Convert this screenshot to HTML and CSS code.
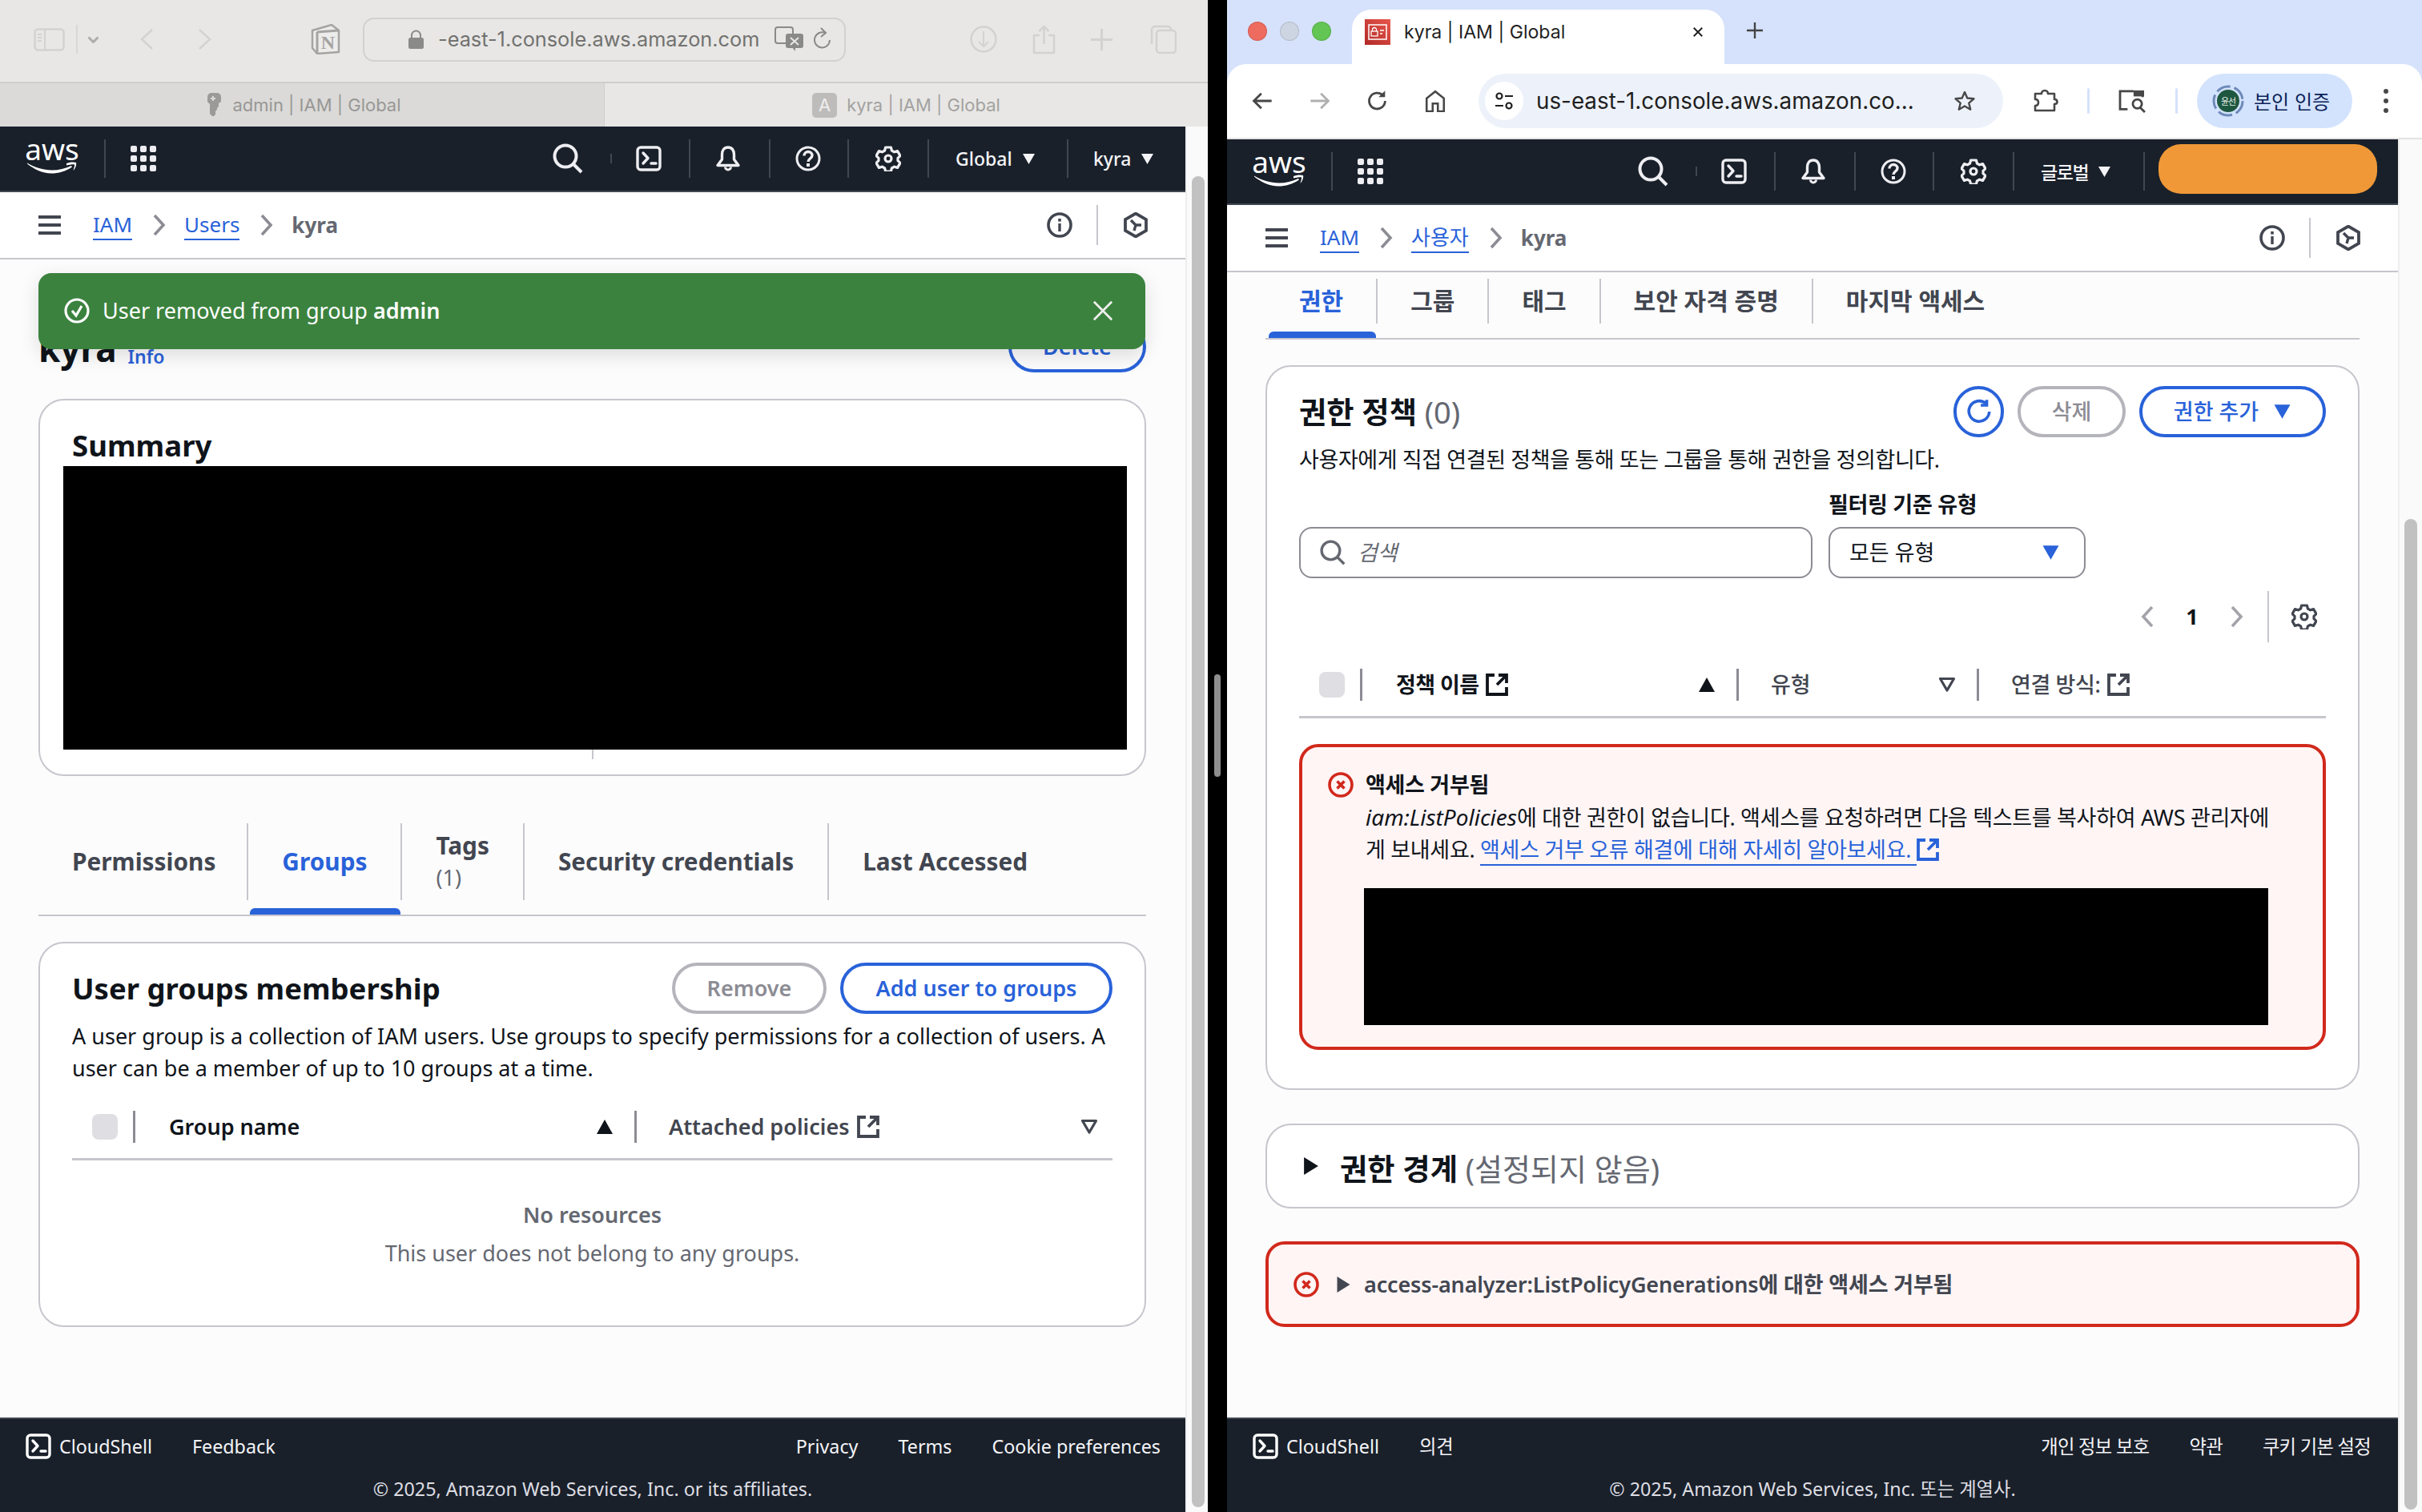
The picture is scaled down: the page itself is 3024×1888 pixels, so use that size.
FILE: index.html
```html
<!DOCTYPE html>
<html lang="ko">
<head>
<meta charset="utf-8">
<title>kyra | IAM | Global</title>
<link rel="stylesheet" href="styles.css">
</head>
<body>
<svg class="sprite" aria-hidden="true">
  <symbol id="i-search" viewBox="0 0 38 38"><circle cx="16" cy="16" r="13.500" fill="none" stroke="currentColor" stroke-width="4"/><path d="M26 26l10 10" fill="none" stroke="currentColor" stroke-width="4"/></symbol>
  <symbol id="i-shell" viewBox="0 0 32 32"><rect x="2" y="2" width="28" height="28" rx="4" fill="none" stroke="currentColor" stroke-width="3.400"/><path d="M9 9l6 6.500L9 22" fill="none" stroke="currentColor" stroke-width="3.400" stroke-linecap="round" stroke-linejoin="round"/><path d="M19 22h6" fill="none" stroke="currentColor" stroke-width="3.400" stroke-linecap="round"/></symbol>
  <symbol id="i-bell" viewBox="0 0 32 32"><path d="M16 2c-5 0-7.500 4-7.500 9v6L3 24.500h26L23.500 17v-6c0-5-2.500-9-7.500-9z" fill="none" stroke="currentColor" stroke-width="3.400" stroke-linejoin="round"/><path d="M12.500 26.500a3.500 3.500 0 0 0 7 0" fill="none" stroke="currentColor" stroke-width="3"/></symbol>
  <symbol id="i-help" viewBox="0 0 32 32"><circle cx="16" cy="16" r="14" fill="none" stroke="currentColor" stroke-width="3"/><path d="M11 12.500c0-3 2.300-5 5-5s5 2 5 4.500c0 4-5 4-5 8" fill="none" stroke="currentColor" stroke-width="3.400"/><rect x="14" y="22" width="4" height="4" fill="currentColor"/></symbol>
  <symbol id="i-gear" viewBox="0 0 32 32"><path d="M12.600 2h6.800l1 4 3.200 1.800 4-1.200 3.400 6-3 2.800v3.200l3 2.800-3.400 6-4-1.200-3.200 1.800-1 4h-6.800l-1-4-3.200-1.800-4 1.200-3.400-6 3-2.800v-3.200l-3-2.800 3.400-6 4 1.200 3.200-1.800z" fill="none" stroke="currentColor" stroke-width="3.200" stroke-linejoin="round"/><circle cx="16" cy="16" r="4" fill="none" stroke="currentColor" stroke-width="3.200"/></symbol>
  <symbol id="i-info" viewBox="0 0 32 32"><circle cx="16" cy="16" r="14" fill="none" stroke="currentColor" stroke-width="3.600"/><path d="M16 14v10" fill="none" stroke="currentColor" stroke-width="3.400"/><rect x="14.200" y="8" width="3.600" height="3.600" fill="currentColor"/></symbol>
  <symbol id="i-hex" viewBox="0 0 32 32"><path d="M16 1.500L29 9v14l-13 7.500L3 23V9z" fill="none" stroke="currentColor" stroke-width="3.800" stroke-linejoin="miter"/><path d="M10 10l6 6h7M16 16l-2 7" fill="none" stroke="currentColor" stroke-width="3.400"/></symbol>
  <symbol id="i-ext" viewBox="0 0 28 28"><path d="M11 2H2v24h24v-9" fill="none" stroke="currentColor" stroke-width="3.800"/><path d="M16 2h10v10" fill="none" stroke="currentColor" stroke-width="3.800"/><path d="M25 3L14 14" fill="none" stroke="currentColor" stroke-width="3.800"/></symbol>
  <symbol id="i-err" viewBox="0 0 32 32"><circle cx="16" cy="16" r="14" fill="none" stroke="currentColor" stroke-width="3.600"/><path d="M11.500 11.500l9 9M20.500 11.500l-9 9" fill="none" stroke="currentColor" stroke-width="3.600"/></symbol>
  <symbol id="i-ok" viewBox="0 0 32 32"><circle cx="16" cy="16" r="14" fill="none" stroke="currentColor" stroke-width="3.200"/><path d="M10 16l5 6 7-12" fill="none" stroke="currentColor" stroke-width="3.200"/></symbol>
  <symbol id="i-sortup" viewBox="0 0 22 20"><path d="M11 1l10 18H1z" fill="currentColor"/></symbol>
  <symbol id="i-sortdn" viewBox="0 0 22 20"><path d="M2.500 2.500h17L11 17z" fill="none" stroke="currentColor" stroke-width="3.200" stroke-linejoin="round"/></symbol>
  <symbol id="i-tridn" viewBox="0 0 18 16"><path d="M1 1h16L9 15z" fill="currentColor"/></symbol>
  <symbol id="i-triright" viewBox="0 0 18 22"><path d="M1 1l16 10L1 21z" fill="currentColor"/></symbol>
  <symbol id="i-chev" viewBox="0 0 16 28"><path d="M2 2l11 12L2 26" fill="none" stroke="currentColor" stroke-width="3.600"/></symbol>
  <symbol id="i-chevl" viewBox="0 0 16 28"><path d="M14 2L3 14l11 12" fill="none" stroke="currentColor" stroke-width="3.600"/></symbol>
  <symbol id="i-menu" viewBox="0 0 28 24"><path d="M0 2h28M0 12h28M0 22h28" fill="none" stroke="currentColor" stroke-width="4"/></symbol>
  <symbol id="i-close" viewBox="0 0 28 28"><path d="M2 2l24 24M26 2L2 26" fill="none" stroke="currentColor" stroke-width="3"/></symbol>
  <symbol id="i-grid" viewBox="0 0 32 32"><path d="M0 2a2 2 0 0 1 2-2h4a2 2 0 0 1 2 2v4a2 2 0 0 1-2 2H2a2 2 0 0 1-2-2zM12 2a2 2 0 0 1 2-2h4a2 2 0 0 1 2 2v4a2 2 0 0 1-2 2h-4a2 2 0 0 1-2-2zM24 2a2 2 0 0 1 2-2h4a2 2 0 0 1 2 2v4a2 2 0 0 1-2 2h-4a2 2 0 0 1-2-2zM0 14a2 2 0 0 1 2-2h4a2 2 0 0 1 2 2v4a2 2 0 0 1-2 2H2a2 2 0 0 1-2-2zM12 14a2 2 0 0 1 2-2h4a2 2 0 0 1 2 2v4a2 2 0 0 1-2 2h-4a2 2 0 0 1-2-2zM24 14a2 2 0 0 1 2-2h4a2 2 0 0 1 2 2v4a2 2 0 0 1-2 2h-4a2 2 0 0 1-2-2zM0 26a2 2 0 0 1 2-2h4a2 2 0 0 1 2 2v4a2 2 0 0 1-2 2H2a2 2 0 0 1-2-2zM12 26a2 2 0 0 1 2-2h4a2 2 0 0 1 2 2v4a2 2 0 0 1-2 2h-4a2 2 0 0 1-2-2zM24 26a2 2 0 0 1 2-2h4a2 2 0 0 1 2 2v4a2 2 0 0 1-2 2h-4a2 2 0 0 1-2-2z" fill="currentColor"/></symbol>
  <symbol id="i-smile" viewBox="0 0 64 16"><path d="M1 2.500C10 8 21 11.500 32 11.500c8 0 17-2 24-5.500l1 1.500C49 13 40 15.500 31 15.500 20 15.500 9 10 1 3.500z" fill="currentColor"/><path d="M50 3c3-1.500 9-2 12-1 .8 2-.5 7-3.500 10 .5-3 2-6 1.500-7.500-2-.6-6 .2-10 1z" fill="currentColor"/></symbol>
  <symbol id="i-refresh" viewBox="0 0 32 32"><path d="M24 6.500A12 12 0 1 0 28 16" fill="none" stroke="currentColor" stroke-width="3.400"/><path d="M25 2v6.500h-7" fill="none" stroke="currentColor" stroke-width="3.400"/></symbol>
</svg>

<div class="desktop">

  <section class="win win-left">
    <header class="saf-bar">
      <svg class="saf-sidebar" viewBox="0 0 39 29"><rect x="1.500" y="1.500" width="36" height="26" rx="4" fill="none" stroke="currentColor" stroke-width="2.500"/><path d="M14 2v25M5 8h5M5 12h5M5 16h5" fill="none" stroke="currentColor" stroke-width="2"/></svg>
      <span class="saf-sep"></span>
      <svg class="saf-chev" viewBox="0 0 15 9"><path d="M1.500 1.500L7.500 7.500l6-6" fill="none" stroke="#aeadab" stroke-width="3"/></svg>
      <svg class="saf-back" viewBox="0 0 17 28"><path d="M15 2L2 14l13 12" fill="none" stroke="currentColor" stroke-width="2.500"/></svg>
      <svg class="saf-fwd" viewBox="0 0 17 28"><path d="M2 2l13 12L2 26" fill="none" stroke="currentColor" stroke-width="2.500"/></svg>
      <svg class="saf-notion" viewBox="0 0 37 38"><path d="M2 8L26 1l9 7v27L8 37 2 30z" fill="#ececea" stroke="#a5a4a2" stroke-width="2.500" stroke-linejoin="round"/><path d="M8 10l27-2M8 10v27" stroke="#a5a4a2" stroke-width="3" fill="none"/><text x="21.500" y="31" class="saf-n">N</text></svg>
      <div class="saf-addr">
        <svg class="saf-lock" viewBox="0 0 19 24"><path d="M4 11V7a5.500 5.500 0 0 1 11 0v4" fill="none" stroke="#8a8a88" stroke-width="2"/><rect x="0" y="10" width="19" height="14" rx="2.500" fill="#8a8a88"/></svg>
        <span class="saf-url">-east-1.console.aws.amazon.com</span>
        <svg class="saf-trans" viewBox="0 0 38 32"><rect x="1" y="1" width="22" height="20" rx="3" fill="none" stroke="#8a8a88" stroke-width="2"/><rect x="14" y="9" width="22" height="18" rx="3" fill="#8a8a88"/><path d="M21 25l5 6v-6z" fill="#8a8a88"/><path d="M20 14l10 9M30 14l-10 9" stroke="#e8e7e5" stroke-width="2"/></svg>
        <svg class="saf-reload" viewBox="0 0 22 30"><path d="M15 7.500A9.500 9.500 0 1 0 20 16" fill="none" stroke="#8a8a88" stroke-width="2"/><path d="M9 1l6 6-6 5" fill="none" stroke="#8a8a88" stroke-width="2"/></svg>
      </div>
      <svg class="saf-dl" viewBox="0 0 34 38"><circle cx="17" cy="19" r="15.500" fill="none" stroke="currentColor" stroke-width="2.500"/><path d="M17 9v19M11 22l6 6 6-6" fill="none" stroke="currentColor" stroke-width="2"/></svg>
      <svg class="saf-share" viewBox="0 0 29 37"><path d="M9 13H2v22h25V13h-7" fill="none" stroke="currentColor" stroke-width="2.500" stroke-linejoin="round"/><path d="M14.500 24V2M8.500 8l6-6 6 6" fill="none" stroke="currentColor" stroke-width="2.500"/></svg>
      <svg class="saf-plus" viewBox="0 0 27 27"><path d="M13.500 0v27M0 13.500h27" stroke="currentColor" stroke-width="3"/></svg>
      <svg class="saf-tabs" viewBox="0 0 34 36"><rect x="9" y="7" width="24" height="28" rx="4" fill="none" stroke="currentColor" stroke-width="2.500"/><path d="M3 24V6a4 4 0 0 1 4-4h16a4 4 0 0 1 4 4" fill="none" stroke="currentColor" stroke-width="2.500"/></svg>
    </header>
    <div class="saf-tabstrip">
      <div class="saf-tab saf-tab-on">
        <svg class="saf-key" viewBox="0 0 21 30"><path d="M2 5a5 5 0 0 1 5-5h7a5 5 0 0 1 5 5v6l-3 2v4l-2 2v2l-2 2v4l-2 2h-2l-3-3V14l-3-3z" fill="#9b9a98"/><path d="M9 4v6M6 7h6" stroke="#dbdad8" stroke-width="2"/></svg>
        <span>admin | IAM | Global</span>
      </div>
      <div class="saf-tab">
        <span class="saf-fav">A</span>
        <span>kyra | IAM | Global</span>
      </div>
    </div>
    <div class="win-body">
      <div class="console">
        <nav class="topnav">
          <div class="aws-logo"><span class="aws-word">aws</span><svg class="aws-smile"><use href="#i-smile"/></svg></div>
          <span class="nav-div"></span>
          <svg class="nav-grid"><use href="#i-grid"/></svg>
          <div class="nav-right">
            <div class="nav-search"><svg class="ic-search"><use href="#i-search"/></svg></div>
            <span class="nav-tick"></span>
            <div class="nav-shell"><svg class="ic-32"><use href="#i-shell"/></svg></div>
            <div class="nav-cell nav-bell"><svg class="ic-32"><use href="#i-bell"/></svg></div>
            <div class="nav-cell nav-cell-98"><svg class="ic-32"><use href="#i-help"/></svg></div>
            <div class="nav-cell"><svg class="ic-32"><use href="#i-gear"/></svg></div>
            <div class="nav-cell nav-menu nav-region-l">Global<svg class="ic-tri"><use href="#i-tridn"/></svg></div>
            <div class="nav-cell nav-menu nav-user">kyra<svg class="ic-tri"><use href="#i-tridn"/></svg></div>
          </div>
        </nav>
        <div class="crumbs">
          <svg class="ic-menu"><use href="#i-menu"/></svg>
          <a class="link crumb-first">IAM</a>
          <svg class="ic-chev"><use href="#i-chev"/></svg>
          <a class="link">Users</a>
          <svg class="ic-chev"><use href="#i-chev"/></svg>
          <span class="crumb-now">kyra</span>
          <div class="crumb-tools">
            <svg class="ic-32"><use href="#i-info"/></svg>
            <span class="crumb-div"></span>
            <svg class="ic-32"><use href="#i-hex"/></svg>
          </div>
        </div>
        <main class="main main-l">
          <div class="flash">
            <svg class="ic-32"><use href="#i-ok"/></svg>
            <span class="flash-text">User removed from group <b>admin</b></span>
            <svg class="flash-x"><use href="#i-close"/></svg>
          </div>
          <div class="page-head">
            <h1 class="page-title">kyra</h1>
            <a class="page-info">Info</a>
            <button class="btn btn-blue btn-delete">Delete</button>
          </div>
          <section class="card card-summary">
            <h2 class="summary-title">Summary</h2>
            <div class="redact redact-summary"></div>
            <span class="summary-tick"></span>
          </section>
          <div class="tabs tabs-l">
            <div class="tab tab-first">Permissions</div>
            <div class="tab tab-on">Groups</div>
            <div class="tab tab-stack"><span>Tags</span><span class="tab-count">(1)</span></div>
            <div class="tab">Security credentials</div>
            <div class="tab">Last Accessed</div>
          </div>
          <section class="card card-groups">
            <div class="card-head">
              <h2 class="card-title">User groups membership</h2>
              <div class="card-actions">
                <button class="btn btn-off btn-remove">Remove</button>
                <button class="btn btn-blue btn-add">Add user to groups</button>
              </div>
            </div>
            <p class="card-desc">A user group is a collection of IAM users. Use groups to specify permissions for a collection of users. A user can be a member of up to 10 groups at a time.</p>
            <div class="thead thead-l">
              <div class="th-check"><span class="checkbox"></span></div>
              <div class="th th-sorted th-l1">Group name<svg class="ic-sort"><use href="#i-sortup"/></svg></div>
              <div class="th th-l2"><span class="th-label">Attached policies<svg class="ic-ext"><use href="#i-ext"/></svg></span><svg class="ic-sort ic-sort-off"><use href="#i-sortdn"/></svg></div>
            </div>
            <div class="empty">
              <strong class="empty-title">No resources</strong>
              <span class="empty-text">This user does not belong to any groups.</span>
            </div>
          </section>
        </main>
        <footer class="foot">
          <div class="foot-row">
            <svg class="ic-32 foot-shell"><use href="#i-shell"/></svg>
            <span class="foot-cs">CloudShell</span>
            <span class="foot-fb">Feedback</span>
            <div class="foot-links"><span>Privacy</span><span>Terms</span><span>Cookie preferences</span></div>
          </div>
          <div class="foot-copy">© 2025, Amazon Web Services, Inc. or its affiliates.</div>
        </footer>
      </div>
      <div class="scroll scroll-l"><span class="thumb thumb-l"></span></div>
    </div>
  </section>

  <span class="split-handle"></span>

  <section class="win win-right">
    <header class="chr-tabs">
      <span class="light light-r"></span><span class="light light-g"></span><span class="light light-n"></span>
      <div class="chr-tab">
        <span class="chr-fav"><svg viewBox="0 0 24 20" class="chr-fav-i"><rect x="1" y="1" width="22" height="18" fill="none" stroke="#fff" stroke-width="1.500"/><rect x="4" y="9" width="8" height="6" fill="none" stroke="#fff" stroke-width="1.300"/><path d="M5.500 9V7a2.500 2.500 0 0 1 5 0v2" fill="none" stroke="#fff" stroke-width="1.300"/><path d="M15 8h5M15 12h3" stroke="#fff" stroke-width="1.500"/></svg></span>
        <span class="chr-title">kyra | IAM | Global</span>
        <svg class="chr-x" viewBox="0 0 16 16"><path d="M2 2l12 12M14 2L2 14" stroke="#1f1f1f" stroke-width="2.200"/></svg>
      </div>
      <svg class="chr-plus" viewBox="0 0 20 20"><path d="M10 0v20M0 10h20" stroke="#444" stroke-width="2.400"/></svg>
    </header>
    <div class="chr-bar">
      <span class="chr-btn"><svg viewBox="0 0 24 24" class="ic-chr"><path d="M22 12H3M11 4l-8 8 8 8" fill="none" stroke="#474747" stroke-width="2.400"/></svg></span>
      <span class="chr-btn"><svg viewBox="0 0 24 24" class="ic-chr"><path d="M2 12h19M13 4l8 8-8 8" fill="none" stroke="#b0b0b0" stroke-width="2.400"/></svg></span>
      <span class="chr-btn"><svg viewBox="0 0 24 24" class="ic-chr"><path d="M20 12a8.500 8.500 0 1 1-2.500-6" fill="none" stroke="#474747" stroke-width="2.400"/><path d="M20 1v7h-7z" fill="#474747"/></svg></span>
      <span class="chr-btn"><svg viewBox="0 0 24 26" class="ic-chr"><path d="M2 25V10L12 2l10 8v15h-7v-9H9v9z" fill="none" stroke="#474747" stroke-width="2.400"/></svg></span>
      <div class="omni">
        <span class="omni-site"><svg viewBox="0 0 24 24" class="ic-site"><circle cx="6" cy="6" r="3.500" fill="none" stroke="#1f1f1f" stroke-width="2.200"/><path d="M13 6h10M1 18h10" stroke="#1f1f1f" stroke-width="2.200"/><circle cx="18" cy="18" r="3.500" fill="none" stroke="#1f1f1f" stroke-width="2.200"/></svg></span>
        <span class="omni-url">us-east-1.console.aws.amazon.co...</span>
        <svg viewBox="0 0 28 28" class="omni-star"><path d="M14 3l3.300 7.500 8.200.8-6.200 5.400 1.900 8L14 20.500l-7.200 4.200 1.900-8-6.200-5.400 8.200-.8z" fill="none" stroke="#474747" stroke-width="2.400" stroke-linejoin="round"/></svg>
      </div>
      <span class="chr-btn chr-ext"><svg viewBox="0 0 32 32" class="ic-puzzle"><path d="M4 7h7c0-2 1.500-4 4-4s4 2 4 4h8v7c2 0 3.500 1 3.500 3s-1.500 3-3.500 3v8H3v-6c2.500 0 4-1.500 4-4s-1.500-4-4-4V7z" fill="none" stroke="#474747" stroke-width="2.600" stroke-linejoin="round"/></svg></span>
      <span class="chr-sep"></span>
      <span class="chr-btn chr-tabsearch"><svg viewBox="0 0 36 32" class="ic-tabsearch"><path d="M20 3H2v24h10" fill="none" stroke="#474747" stroke-width="3"/><rect x="20" y="2" width="14" height="8" fill="#474747"/><path d="M32 3v8" stroke="#474747" stroke-width="3"/><circle cx="25" cy="20" r="6" fill="none" stroke="#474747" stroke-width="3"/><path d="M29 25l6 6" stroke="#474747" stroke-width="3"/></svg></span>
      <span class="chr-sep chr-sep2"></span>
      <div class="chr-profile">
        <span class="avatar"><svg viewBox="0 0 40 40" class="avatar-ring"><circle cx="20" cy="20" r="18" fill="none" stroke="#6f8ab9" stroke-width="3" stroke-dasharray="18 5"/></svg><span class="avatar-in">윤선</span></span>
        <span class="profile-text">본인 인증</span>
      </div>
      <svg viewBox="0 0 8 32" class="chr-dots"><circle cx="4" cy="4" r="3" fill="#474747"/><circle cx="4" cy="16" r="3" fill="#474747"/><circle cx="4" cy="28" r="3" fill="#474747"/></svg>
    </div>
    <div class="win-body">
      <div class="console console-r">
        <nav class="topnav">
          <div class="aws-logo"><span class="aws-word">aws</span><svg class="aws-smile"><use href="#i-smile"/></svg></div>
          <span class="nav-div"></span>
          <svg class="nav-grid"><use href="#i-grid"/></svg>
          <div class="nav-right">
            <div class="nav-search"><svg class="ic-search"><use href="#i-search"/></svg></div>
            <span class="nav-tick"></span>
            <div class="nav-shell"><svg class="ic-32"><use href="#i-shell"/></svg></div>
            <div class="nav-cell nav-bell"><svg class="ic-32"><use href="#i-bell"/></svg></div>
            <div class="nav-cell nav-cell-98"><svg class="ic-32"><use href="#i-help"/></svg></div>
            <div class="nav-cell"><svg class="ic-32"><use href="#i-gear"/></svg></div>
            <div class="nav-cell nav-menu nav-region-r">글로벌<svg class="ic-tri"><use href="#i-tridn"/></svg></div>
            <div class="nav-cell nav-user-r"><span class="nav-orange"></span></div>
          </div>
        </nav>
        <div class="crumbs crumbs-k">
          <svg class="ic-menu"><use href="#i-menu"/></svg>
          <a class="link crumb-first">IAM</a>
          <svg class="ic-chev"><use href="#i-chev"/></svg>
          <a class="link">사용자</a>
          <svg class="ic-chev"><use href="#i-chev"/></svg>
          <span class="crumb-now">kyra</span>
          <div class="crumb-tools">
            <svg class="ic-32"><use href="#i-info"/></svg>
            <span class="crumb-div"></span>
            <svg class="ic-32"><use href="#i-hex"/></svg>
          </div>
        </div>
        <main class="main main-r">
          <div class="tabs tabs-r">
            <div class="tab tab-on tab-first">권한</div>
            <div class="tab">그룹</div>
            <div class="tab">태그</div>
            <div class="tab">보안 자격 증명</div>
            <div class="tab">마지막 액세스</div>
          </div>
          <section class="card card-perm">
            <div class="card-head">
              <h2 class="card-title card-title-k">권한 정책 <span class="card-count">(0)</span></h2>
              <div class="card-actions">
                <button class="btn btn-blue btn-round"><svg class="ic-32"><use href="#i-refresh"/></svg></button>
                <button class="btn btn-off btn-del-k">삭제</button>
                <button class="btn btn-blue btn-add-k">권한 추가<svg class="ic-tri ic-tri-btn"><use href="#i-tridn"/></svg></button>
              </div>
            </div>
            <p class="card-desc card-desc-k">사용자에게 직접 연결된 정책을 통해 또는 그룹을 통해 권한을 정의합니다.</p>
            <div class="filters">
              <div class="field field-search">
                <svg class="ic-field"><use href="#i-search"/></svg>
                <span class="placeholder">검색</span>
              </div>
              <div class="filter-col">
                <label class="filter-label">필터링 기준 유형</label>
                <div class="field field-select">모든 유형<svg class="ic-tri ic-tri-sel"><use href="#i-tridn"/></svg></div>
              </div>
            </div>
            <div class="pager">
              <svg class="ic-pg"><use href="#i-chevl"/></svg>
              <span class="pg-num">1</span>
              <svg class="ic-pg"><use href="#i-chev"/></svg>
              <span class="pg-div"></span>
              <svg class="ic-32 ic-pg-gear"><use href="#i-gear"/></svg>
            </div>
            <div class="thead thead-r">
              <div class="th-check"><span class="checkbox"></span></div>
              <div class="th th-sorted th-r1"><span class="th-label">정책 이름<svg class="ic-ext"><use href="#i-ext"/></svg></span><svg class="ic-sort"><use href="#i-sortup"/></svg></div>
              <div class="th th-plain th-r2">유형<svg class="ic-sort ic-sort-off"><use href="#i-sortdn"/></svg></div>
              <div class="th th-plain th-r3"><span class="th-label">연결 방식:<svg class="ic-ext"><use href="#i-ext"/></svg></span></div>
            </div>
            <div class="alert alert-big">
              <svg class="ic-32 ic-err"><use href="#i-err"/></svg>
              <div class="alert-body">
                <strong class="alert-title">액세스 거부됨</strong>
                <p class="alert-text"><i>iam:ListPolicies</i>에 대한 권한이 없습니다. 액세스를 요청하려면 다음 텍스트를 복사하여 AWS 관리자에<br>게 보내세요. <a class="link">액세스 거부 오류 해결에 대해 자세히 알아보세요.&nbsp;</a><svg class="ic-ext ic-ext-link"><use href="#i-ext"/></svg></p>
                <div class="redact redact-alert"></div>
              </div>
            </div>
          </section>
          <section class="card card-bound">
            <svg class="ic-expand"><use href="#i-triright"/></svg>
            <h2 class="card-title card-title-k">권한 경계 <span class="card-count">(설정되지 않음)</span></h2>
          </section>
          <div class="alert alert-small">
            <svg class="ic-32 ic-err"><use href="#i-err"/></svg>
            <svg class="ic-expand-s"><use href="#i-triright"/></svg>
            <span class="alert-line">access-analyzer:ListPolicyGenerations에 대한 액세스 거부됨</span>
          </div>
        </main>
        <footer class="foot">
          <div class="foot-row">
            <svg class="ic-32 foot-shell"><use href="#i-shell"/></svg>
            <span class="foot-cs">CloudShell</span>
            <span class="foot-fb">의견</span>
            <div class="foot-links foot-links-k"><span>개인 정보 보호</span><span>약관</span><span>쿠키 기본 설정</span></div>
          </div>
          <div class="foot-copy">© 2025, Amazon Web Services, Inc. 또는 계열사.</div>
        </footer>
      </div>
      <div class="scroll scroll-r"><span class="thumb thumb-r"></span></div>
    </div>
  </section>
</div>
</body>
</html>
```

FILE: styles.css
```css
* { box-sizing: border-box; }
html, body { margin: 0; padding: 0; background: #000; }
body { width: 3024px; height: 1888px; overflow: hidden; font-family: "Noto Sans", "Noto Sans CJK KR", sans-serif; font-size: 27px; line-height: 40px; color: #0f141a; }
.sprite { display: none; }
svg { display: block; flex: none; }
p, h1, h2 { margin: 0; }
button { font: inherit; }

.desktop { position: relative; width: 3024px; height: 1888px; }
.win { position: absolute; top: 0; height: 1888px; display: flex; flex-direction: column; }
.win-left { left: 0; width: 1508px; background: #e8e7e5; }
.win-right { left: 1532px; width: 1492px; background: #d6e2fb; }
.win-body { flex: 1; display: flex; min-height: 0; }
.split-handle { position: absolute; left: 1516px; top: 842px; width: 8px; height: 128px; border-radius: 4px; background: #8e8e8e; }

/* Safari chrome */
.saf-bar { height: 102px; display: flex; align-items: center; color: #d3d2d0; background: #e8e7e5; }
.saf-bar svg { margin-top: -4px; }
.saf-sidebar { width: 39px; height: 29px; margin-left: 42px; }
.saf-sep { width: 2px; height: 36px; margin: -4px 0 0 14px; background: #d8d7d5; }
.saf-chev { width: 15px; height: 9px; margin-left: 12px; }
.saf-back { width: 17px; height: 28px; margin-left: 51px; }
.saf-fwd { width: 17px; height: 28px; margin-left: 55px; }
.saf-notion { width: 37px; height: 38px; margin-left: 124px; }
.saf-n { font-family: "Liberation Serif", serif; font-size: 24px; font-weight: 700; fill: #a5a4a2; text-anchor: middle; }
.saf-addr { width: 603px; height: 55px; margin: -4px 0 0 28px; border: 2px solid #d2d1cf; border-radius: 14px; display: flex; align-items: center; padding-left: 55px; flex: none; }
.saf-addr svg { margin-top: 0; }
.saf-lock { width: 19px; height: 24px; }
.saf-url { font-family: Inter, sans-serif; font-size: 25.300px; color: #727270; margin-left: 18px; white-space: nowrap; line-height: 30px; }
.saf-trans { width: 38px; height: 32px; margin-left: 19px; }
.saf-reload { width: 22px; height: 30px; margin-left: 11px; }
.saf-dl { width: 34px; height: 38px; margin-left: 155px; }
.saf-share { width: 29px; height: 37px; margin-left: 44px; }
.saf-plus { width: 27px; height: 27px; margin-left: 44px; }
.saf-tabs { width: 34px; height: 36px; margin-left: 46px; }
.saf-tabstrip { height: 56px; display: flex; border-top: 2px solid #cfcecc; background: #e8e7e5; }
.saf-tab { width: 753px; display: flex; align-items: center; justify-content: center; gap: 12px; font-family: Inter, sans-serif; font-size: 22px; color: #a3a2a0; line-height: 30px; }
.saf-tab-on { width: 755px; padding-left: 4px; background: #dbdad8; border-right: 1px solid #cfcecc; color: #989795; }
.saf-key { width: 21px; height: 30px; }
.saf-fav { width: 31px; height: 31px; border-radius: 5px; background: #bdbcba; color: #eee; display: flex; align-items: center; justify-content: center; font-size: 22px; }

/* Chrome */
.chr-tabs { height: 80px; display: flex; align-items: flex-start; padding-left: 26px; background: #d6e2fb; }
.light { width: 24px; height: 24px; border-radius: 50%; margin-top: 27px; margin-right: 16px; border: 1px solid rgba(0,0,0,.12); }
.light-r { background: #ee6b5f; }
.light-g { background: #cdd5e3; }
.light-n { background: #62c554; }
.chr-tab { width: 465px; height: 68px; margin-left: 10px; margin-top: 12px; background: #fff; border-radius: 24px 24px 0 0; display: flex; align-items: center; padding: 0 16px 12px 16px; }
.chr-fav { width: 32px; height: 32px; background: linear-gradient(45deg, #b12a27, #e9574c); display: flex; align-items: center; justify-content: center; }
.chr-fav-i { width: 24px; height: 20px; }
.chr-title { font-family: Inter, sans-serif; font-size: 23.100px; line-height: 32px; margin-left: 17px; color: #1f1f1f; white-space: nowrap; }
.chr-x { width: 14px; height: 14px; margin-left: auto; margin-right: 10px; }
.chr-plus { width: 20px; height: 20px; margin: 28px 0 0 28px; }
.chr-bar { height: 94px; background: #fff; border-radius: 24px 24px 0 0; border-bottom: 2px solid #e3e3e3; display: flex; align-items: center; padding-left: 8px; }
.chr-btn { width: 72px; height: 64px; display: flex; align-items: center; justify-content: center; flex: none; }
.ic-chr { width: 28px; height: 28px; }
.omni { width: 655px; height: 68px; margin-left: 18px; border-radius: 34px; background: #edf2fa; display: flex; align-items: center; padding-left: 8px; flex: none; }
.omni-site { width: 48px; height: 48px; border-radius: 50%; background: #fff; display: flex; align-items: center; justify-content: center; }
.ic-site { width: 24px; height: 24px; }
.omni-url { font-family: Inter, sans-serif; font-size: 27.800px; color: #1f1f1f; margin-left: 16px; line-height: 36px; white-space: nowrap; }
.omni-star { width: 28px; height: 28px; margin-left: auto; margin-right: 34px; }
.chr-ext { margin-left: 17px; }
.ic-puzzle { width: 32px; height: 32px; }
.chr-sep { width: 3px; height: 32px; border-radius: 2px; background: #d6e2fb; margin-left: 16px; flex: none; }
.chr-tabsearch { margin-left: 17px; }
.ic-tabsearch { width: 34px; height: 30px; }
.chr-sep2 { margin-left: 18px; }
.chr-profile { width: 194px; height: 68px; margin-left: 24px; border-radius: 34px; background: #d3e3fd; display: flex; align-items: center; padding-left: 19px; flex: none; }
.avatar { position: relative; width: 40px; height: 40px; display: flex; align-items: center; justify-content: center; }
.avatar-ring { position: absolute; inset: 0; width: 40px; height: 40px; }
.avatar-in { width: 28px; height: 28px; border-radius: 50%; background: #1e5740; color: #e8efe9; font-family: "Noto Sans CJK KR", sans-serif; font-size: 11px; line-height: 28px; text-align: center; letter-spacing: -1px; }
.profile-text { font-family: "Noto Sans CJK KR", sans-serif; font-size: 24px; line-height: 32px; color: #0b2258; margin-left: 12px; white-space: nowrap; }
.chr-dots { width: 8px; height: 32px; margin-left: 38px; }

/* Console shell */
.console { width: 1480px; display: flex; flex-direction: column; background: #fcfcfd; flex: none; }
.console-r { width: 1462px; }
.scroll { flex: 1; background: #fafafa; border-left: 2px solid #eee; display: flex; }
.thumb { width: 16px; border-radius: 8px; background: #c1c1c1; }
.thumb-l { margin: 62px 0 6px 6px; }
.thumb-r { margin: 474px 0 3px 6px; }

.topnav { height: 82px; flex: none; display: flex; align-items: center; background: #19202a; border-bottom: 2px solid #414750; color: #eeeef2; }
.aws-logo { width: 64px; margin-left: 33px; height: 48px; display: flex; flex-direction: column; align-items: center; }
.aws-word { font-family: "Noto Sans", sans-serif; font-size: 37px; font-weight: 400; line-height: 30px; color: #fff; margin-top: -3px; }
.aws-smile { width: 64px; height: 16px; color: #fff; }
.nav-div { width: 2px; height: 48px; background: #414750; margin-left: 33px; }
.nav-grid { width: 32px; height: 32px; margin-left: 31px; }
.nav-right { display: flex; align-items: center; margin-left: auto; }
.nav-search { width: 106px; display: flex; justify-content: center; }
.ic-search { width: 38px; height: 38px; }
.nav-tick { width: 2px; height: 12px; background: #414750; }
.nav-shell { width: 96px; padding-right: 4px; display: flex; justify-content: center; }
.ic-32 { width: 32px; height: 32px; }
.nav-cell { width: 100px; height: 48px; border-left: 2px solid #414750; display: flex; align-items: center; justify-content: center; }
.nav-bell { padding-right: 4px; }
.nav-cell-98 { width: 98px; padding-right: 2px; }
.nav-menu { font-size: 23px; font-weight: 500; line-height: 32px; justify-content: flex-start; padding: 0 0 0 33px; color: #f4f4f7; }
.nav-region-l { width: 174px; }
.nav-region-r { width: 163px; padding-left: 33px; font-family: "Noto Sans CJK KR", sans-serif; letter-spacing: -1.400px; }
.nav-user { width: 148px; padding-left: 31px; }
.nav-user-r { width: 318px; padding-left: 17px; justify-content: flex-start; }
.ic-tri { width: 17px; height: 15px; margin-left: 12px; color: #f4f4f7; }
.nav-orange { width: 273px; height: 62px; margin-bottom: 6px; border-radius: 28px; background: #f09837; }

.crumbs { height: 84px; flex: none; background: #fff; border-bottom: 2px solid #c6c6cd; display: flex; align-items: center; padding-left: 48px; font-size: 26px; }
.ic-menu { width: 28px; height: 24px; color: #424650; margin-right: 40px; }
.link { color: #2962d9; border-bottom: 2px solid #2962d9; line-height: 36px; }
.ic-chev { width: 16px; height: 28px; margin: 0 23px 0 26px; color: #8c8c94; }
.crumb-now { font-weight: 700; color: #656871; }
.crumb-tools { margin-left: auto; margin-right: 46px; display: flex; align-items: center; color: #424650; }
.crumb-div { width: 2px; height: 50px; background: #c6c6cd; margin: 0 31px 0 30px; }

/* Main */
.main { flex: 1; min-height: 0; position: relative; overflow: hidden; }
.main-l { padding: 77px 49px 0 48px; }
.main-r { padding: 8px 48px 0 48px; }

.flash { position: absolute; left: 48px; top: 17px; width: 1382px; height: 95px; border-radius: 16px; background: #3b823e; color: #fff; display: flex; align-items: center; padding: 0 40px 2px 32px; box-shadow: 0 8px 24px rgba(0,0,0,.13); z-index: 2; }
.flash-text { margin-left: 16px; }
.flash-text b { font-weight: 600; }
.flash-x { width: 26px; height: 26px; margin-left: auto; color: #eee; }

.page-head { height: 64px; display: flex; align-items: flex-end; }
.page-title { font-size: 44px; line-height: 64px; font-weight: 700; margin-bottom: -2px; }
.page-info { color: #2962d9; font-size: 23px; line-height: 32px; font-weight: 600; margin-left: 14px; margin-bottom: 4px; }
.btn { height: 64px; border: 4px solid #2962d9; border-radius: 32px; background: transparent; font-weight: 600; font-size: 27px; line-height: 40px; display: inline-flex; align-items: center; justify-content: center; padding: 0; white-space: nowrap; flex: none; }
.btn-blue { color: #2962d9; background: #fff; }
.btn-off { color: #8c8c94; border-color: #b4b4bb; background: #fff; }
.btn-delete { width: 172px; margin-left: auto; background: transparent; }

.card { border: 2px solid #c6c6cd; border-radius: 32px; background: #fff; }
.card-summary { margin-top: 33px; height: 471px; padding: 32px 22px 0 29px; }
.summary-title { font-size: 36.600px; line-height: 48px; font-weight: 700; margin-left: 11px; margin-bottom: 2px; }
.redact { background: #000; }
.redact-summary { height: 354px; }
.summary-tick { display: block; width: 2px; height: 12px; background: #c6c6cd; margin-left: 660px; }

.tabs { display: flex; border-bottom: 2px solid #c6c6cd; padding-bottom: 18px; color: #424650; font-weight: 700; font-size: 30px; }
.tabs-l { margin-top: 59px; width: 1383px; font-size: 29.800px; }
.tabs-l .tab { height: 96px; }
.tabs-l .tab-first { padding-right: 39px; }
.tabs-r { width: 1366px; }
.tabs-r .tab { height: 56px; padding: 0 41px; }
.tabs-r .tab-first { padding: 0 41px 0 42px; }
.tab { position: relative; display: flex; flex-direction: column; justify-content: center; padding: 0 42px; border-left: 2px solid #c6c6cd; white-space: nowrap; flex: none; }
.tab-first { border-left: 0; }
.tab-on { color: #2962d9; }
.tab-on::after { content: ""; position: absolute; left: 2px; right: 0; bottom: -18px; height: 8px; border-radius: 6px 6px 0 0; background: #2962d9; }
.tabs-r .tab-first::after { left: 4px; }
.tab-count { font-weight: 400; color: #656871; font-size: 27px; }
.card-groups { margin-top: 32px; height: 481px; padding: 24px 40px 0 40px; }
.card-head { display: flex; align-items: center; height: 64px; }
.card-title { font-size: 36.500px; line-height: 48px; font-weight: 700; white-space: nowrap; }
.card-title-k { font-size: 37.300px; }
.card-count { font-weight: 400; color: #656871; font-size: 38px; }
.card-actions { margin-left: auto; display: flex; gap: 17px; }
.btn-remove { width: 193px; }
.btn-add { width: 340px; }
.card-desc { margin-top: 8px; }
.card-desc-k { letter-spacing: -.400px; }
.thead { display: flex; height: 40px; margin-top: 33px; box-sizing: content-box; padding-bottom: 19px; border-bottom: 3px solid #c6c6cd; }
.th-check { width: 76px; display: flex; align-items: center; padding-left: 25px; flex: none; }
.checkbox { width: 32px; height: 32px; border-radius: 8px; background: #dedee3; }
.th { border-left: 3px solid #8c8c94; padding: 0 26px 0 40px; display: flex; align-items: center; justify-content: space-between; flex: none; font-weight: 600; color: #424650; }
.th-sorted { color: #0f141a; padding-left: 42px; }
.th-plain { font-weight: 500; }
.th-label { display: flex; align-items: center; gap: 9px; }
.th-l1 { width: 626px; }
.th-l2 { width: 597px; padding-right: 18px; }
.th-r1 { width: 470px; letter-spacing: -.600px; }
.th-r2 { width: 300px; }
.th-r3 { flex: 1; letter-spacing: -.400px; }
.ic-sort { width: 22px; height: 20px; }
.ic-sort-off { color: #424650; }
.ic-ext { width: 28px; height: 28px; }
.empty { display: flex; flex-direction: column; align-items: center; margin-top: 48px; gap: 8px; color: #656871; }
.empty-title { font-weight: 600; }

.card-perm { margin-top: 32px; height: 905px; padding: 24px 40px 0 40px; }
.btn-round { width: 63px; }
.btn-round .ic-32 { width: 34px; height: 34px; }
.btn-del-k { width: 135px; font-weight: 500; }
.btn-add-k { width: 233px; font-weight: 500; }
.ic-tri-btn { margin-left: 18px; color: #2962d9; width: 23px; height: 20px; }
.filters { display: flex; align-items: flex-end; gap: 20px; margin-top: 18px; }
.field { height: 64px; border: 2px solid #8c8c94; border-radius: 16px; background: #fff; display: flex; align-items: center; }
.field-search { width: 641px; padding-left: 24px; }
.ic-field { width: 32px; height: 32px; color: #656871; }
.placeholder { font-style: italic; color: #656871; margin-left: 15px; }
.filter-col { display: flex; flex-direction: column; gap: 10px; width: 321px; }
.filter-label { font-weight: 600; line-height: 36px; letter-spacing: -.300px; }
.field-select { padding: 0 30px 0 24px; justify-content: space-between; }
.ic-tri-sel { color: #2962d9; width: 23px; height: 20px; }
.pager { display: flex; align-items: center; justify-content: flex-end; height: 64px; margin-top: 16px; color: #a3a3aa; }
.ic-pg { width: 16px; height: 28px; }
.pg-num { font-weight: 700; color: #0f141a; width: 16px; text-align: center; margin: 0 40px; }
.pg-div { width: 2px; height: 64px; background: #c6c6cd; margin-left: 30px; }
.ic-pg-gear { color: #424650; margin: 0 11px 0 28px; }
.thead-r { margin-top: 33px; }
.alert { border: 4px solid #d1291c; border-radius: 24px; background: #fff5f5; }
.alert-big { margin-top: 32px; height: 382px; display: flex; padding: 27px 0 0 32px; }
.ic-err { color: #d1291c; }
.alert-big .ic-err { margin-top: 4px; }
.alert-body { margin-left: 15px; width: 1130px; flex: none; }
.alert-title { display: block; font-weight: 600; letter-spacing: -.300px; }
.alert-text { white-space: nowrap; letter-spacing: -.300px; }
.alert-text i { font-style: italic; font-size: 28px; letter-spacing: 0; }
.alert-text .ic-ext-link { display: inline-block; vertical-align: -4px; color: #2962d9; }
.redact-alert { height: 171px; margin-top: 28px; width: 1129px; margin-left: -2px; }
.card-bound { margin-top: 42px; height: 106px; display: flex; align-items: center; padding-left: 45px; }
.card-bound .card-title { margin-top: 6px; }
.ic-expand { width: 20px; height: 26px; color: #0f141a; margin-right: 26px; }
.alert-small { margin-top: 41px; height: 107px; display: flex; align-items: center; padding-left: 31px; }
.ic-expand-s { width: 19px; height: 22px; color: #424650; margin-left: 21px; }
.alert-line { font-weight: 600; color: #424650; margin-left: 16px; white-space: nowrap; letter-spacing: -.150px; }

/* Footer */
.foot { height: 118px; flex: none; background: #19202a; border-top: 2px solid #414750; color: #f4f4f7; padding-top: 16px; font-size: 23.300px; line-height: 36px; }
.foot-row { display: flex; align-items: center; padding: 0 31px 0 32px; height: 36px; }
.foot-shell { color: #fff; }
.foot-cs { margin-left: 10px; }
.foot-fb { margin-left: 50px; }
.foot-links { margin-left: auto; display: flex; gap: 50px; }
.foot-links-k { letter-spacing: -.700px; margin-right: 3px; }
.foot-copy { text-align: center; margin-top: 17px; color: #dedee3; }
```
